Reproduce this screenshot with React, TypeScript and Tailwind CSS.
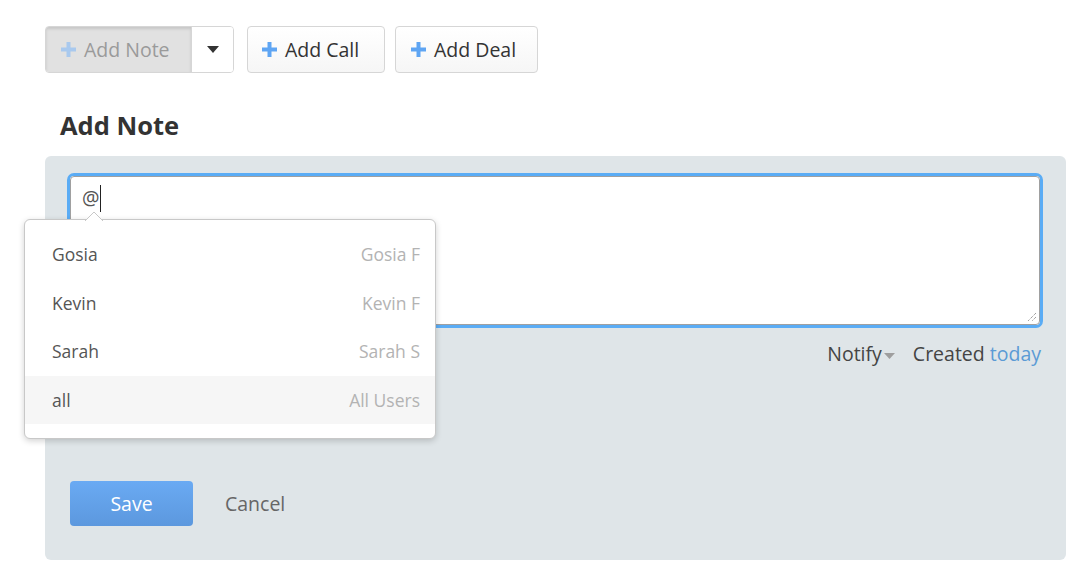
import React from "react";

const Plus = ({ light }: { light?: boolean }) => (
  <svg width="15" height="15" viewBox="0 0 15 15" className="shrink-0">
    <rect x="5.5" y="0" width="4" height="15" fill={light ? "#a9c9ee" : "#5fa5f3"} />
    <rect x="0" y="5.5" width="15" height="4" fill={light ? "#a9c9ee" : "#5fa5f3"} />
  </svg>
);

const users = [
  ["Gosia", "Gosia F"],
  ["Kevin", "Kevin F"],
  ["Sarah", "Sarah S"],
  ["all", "All Users"],
];

export default function App() {
  return (
    <div
      className="min-h-[585px] bg-white pl-[45px] pt-[26px] text-[#333]"
      style={{ fontFamily: '"Open Sans", "Noto Sans", sans-serif' }}
    >
      <div className="flex items-center">
        <div className="flex h-[47px] rounded-[4px] border border-[#d6d6d6] overflow-hidden">
          <div className="flex w-[145px] items-center gap-[8px] bg-[#e1e1e1] pl-[15px] text-[19.5px] text-[#9a9a9a] shadow-[inset_0_2px_3px_rgba(0,0,0,0.12)]">
            <Plus light />
            <span>Add Note</span>
          </div>
          <div className="flex w-[42px] items-center justify-center border-l border-[#d6d6d6] bg-white">
            <svg width="12" height="7" viewBox="0 0 12 7">
              <path d="M0 0 L12 0 L6 7 Z" fill="#333" />
            </svg>
          </div>
        </div>
        <div className="ml-[13px] flex h-[47px] w-[138px] items-center gap-[8px] rounded-[4px] border border-[#d6d6d6] bg-gradient-to-b from-white to-[#f6f6f6] pl-[14px] text-[19.5px] text-[#333]">
          <Plus />
          <span>Add Call</span>
        </div>
        <div className="ml-[10px] flex h-[47px] w-[143px] items-center gap-[8px] rounded-[4px] border border-[#d6d6d6] bg-gradient-to-b from-white to-[#f6f6f6] pl-[15px] text-[19.5px] text-[#333]">
          <Plus />
          <span>Add Deal</span>
        </div>
      </div>

      <h2 className="mt-[35px] pl-[15px] text-[25.5px] font-bold leading-[34px] text-[#333]">Add Note</h2>

      <div className="relative mt-[14px] h-[404px] w-[1021px] rounded-[6px] bg-[#dfe5e8] pl-[22px] pr-[23px] pt-[17px]">
        <div className="relative h-[155px] rounded-[7px] border-[3px] border-[#5aacf5] bg-white">
          <div className="absolute inset-0 rounded-[4px] border border-[#a0a0a0]"></div>
          <div className="flex items-center pl-[12px] pt-[8px] text-[19.5px] leading-[28px] text-[#555]">
            <span>@</span>
            <span className="ml-[1px] inline-block h-[27px] w-[1px] bg-[#222]"></span>
          </div>
          <svg className="absolute bottom-[3px] right-[3px]" width="10" height="10" viewBox="0 0 10 10">
            <path d="M9 1 L1 9 M9 5 L5 9" stroke="#777" strokeWidth="1" strokeDasharray="1 1" />
          </svg>
        </div>

        <div className="mt-[13px] flex justify-end gap-[18px] pr-[2px] text-[19.5px] leading-[26px]">
          <span className="flex items-center text-[#444]">
            Notify
            <svg className="ml-[2px] mt-[3px]" width="11" height="6" viewBox="0 0 11 6">
              <path d="M0 0 L11 0 L5.5 6 Z" fill="#9e9e9e" />
            </svg>
          </span>
          <span className="text-[#444]">
            Created <span className="text-[#5b9bd5]">today</span>
          </span>
        </div>

        <div className="mt-[114px] flex items-center gap-[32px] pl-[3px]">
          <button className="h-[45px] w-[123px] rounded-[4px] bg-gradient-to-b from-[#6aaaf3] to-[#5c98de] text-[19.5px] text-white">
            Save
          </button>
          <span className="text-[19.5px] text-[#666]">Cancel</span>
        </div>

        <div className="absolute left-[-21px] top-[63px] h-[220px] w-[412px] rounded-[6px] border border-[#c8c8c8] bg-white shadow-[0_2px_6px_rgba(0,0,0,0.18)]">
          <svg className="absolute left-[60px] top-[-9px]" width="18" height="10" viewBox="0 0 18 10">
            <path d="M0 10 L9 1 L18 10 Z" fill="white" />
            <path d="M0 10 L9 1 L18 10" fill="none" stroke="#c8c8c8" strokeWidth="1" />
          </svg>
          <div className="pt-[10px]">
            {users.map(([a, b], i) => (
              <div
                key={a}
                className={`flex h-[48.5px] items-center justify-between pl-[27px] pr-[15px] text-[17.5px] ${
                  i === 3 ? "bg-[#f6f6f6]" : ""
                }`}
              >
                <span className="text-[#555]">{a}</span>
                <span className="text-[#b3b3b3]">{b}</span>
              </div>
            ))}
          </div>
        </div>
      </div>
    </div>
  );
}
